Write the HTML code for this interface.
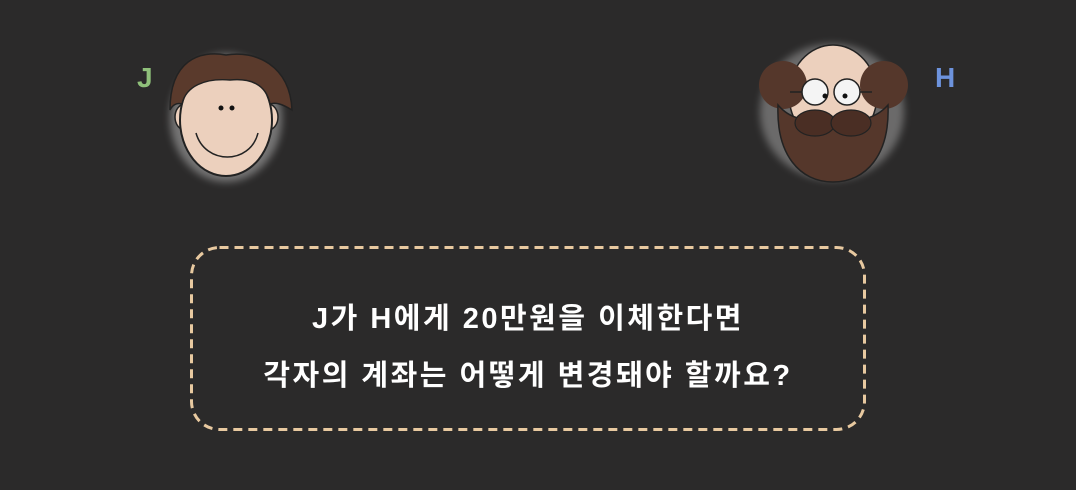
<!DOCTYPE html>
<html><head><meta charset="utf-8"><style>
html,body{margin:0;padding:0;background:#2b2a2a;width:1076px;height:490px;overflow:hidden;position:relative;font-family:"Liberation Sans","Noto Sans CJK KR","NanumGothic",sans-serif}
.t{position:absolute;left:0;width:1056px;text-align:center;color:#fff;font-size:29px;font-weight:bold;letter-spacing:2.5px}
.lbl{position:absolute;font-size:28px;font-weight:bold}
</style></head><body>
<div class="lbl" style="left:137px;top:62px;color:#8fc07a">J</div>
<div class="lbl" style="left:935px;top:62px;color:#6d93dd">H</div>
<svg width="1076" height="490" style="position:absolute;left:0;top:0">
<defs><filter id="g" x="-30%" y="-30%" width="160%" height="160%"><feGaussianBlur stdDeviation="4"/></filter></defs>
<g>
<ellipse cx="226" cy="118" rx="56" ry="64" fill="#fff" opacity=".35" filter="url(#g)"/>
<ellipse cx="185" cy="117" rx="10" ry="13" fill="#ecd0bd" stroke="#222" stroke-width="1.5"/>
<ellipse cx="268" cy="117" rx="10" ry="13" fill="#ecd0bd" stroke="#222" stroke-width="1.5"/>
<ellipse cx="226" cy="120" rx="46" ry="56" fill="#ecd0bd" stroke="#222" stroke-width="2"/>
<path d="M170 110 C170 60 200 50 226 55 C255 50 290 65 292 110 C282 104 276 102 270 104 C266 84 250 78 230 80 C205 78 186 86 182 104 C176 102 172 106 170 110Z" fill="#5a3a2c" stroke="#222" stroke-width="1.5"/>
<circle cx="221" cy="108" r="2.5" fill="#111"/><circle cx="232" cy="108" r="2.5" fill="#111"/>
<path d="M196 133 C205 165 250 165 258 133" fill="none" stroke="#222" stroke-width="1.5"/>
</g>
<g>
<ellipse cx="832" cy="112" rx="72" ry="68" fill="#fff" opacity=".3" filter="url(#g)"/>
<ellipse cx="833" cy="95" rx="44" ry="50" fill="#ecd0bd" stroke="#222" stroke-width="1.5"/>
<circle cx="783" cy="85" r="24" fill="#55372b"/><circle cx="884" cy="85" r="24" fill="#55372b"/>
<path d="M778 105 C776 155 800 182 833 182 C866 182 890 155 888 105 C870 125 850 118 833 120 C815 118 795 125 778 105Z" fill="#55372b" stroke="#222" stroke-width="1.5"/>
<circle cx="815" cy="92" r="13" fill="#f4f4f4" stroke="#222" stroke-width="1.5"/>
<circle cx="847" cy="92" r="13" fill="#f4f4f4" stroke="#222" stroke-width="1.5"/>
<circle cx="825" cy="96" r="2.5" fill="#111"/><circle cx="845" cy="96" r="2.5" fill="#111"/>
<path d="M802 92 H790 M860 92 H872" stroke="#222" stroke-width="1.5"/>
<ellipse cx="815" cy="123" rx="20" ry="13" fill="#4a2e24" stroke="#222" stroke-width="1.2"/>
<ellipse cx="851" cy="123" rx="20" ry="13" fill="#4a2e24" stroke="#222" stroke-width="1.2"/>
</g>
<rect x="191.5" y="247.5" width="673" height="182" rx="28" fill="none" stroke="#e8c9a0" stroke-width="3" stroke-dasharray="9 6"/>
</svg>
<div class="t" style="top:295px">J가 H에게 20만원을 이체한다면</div>
<div class="t" style="top:352px">각자의 계좌는 어떻게 변경돼야 할까요?</div>
</body></html>
